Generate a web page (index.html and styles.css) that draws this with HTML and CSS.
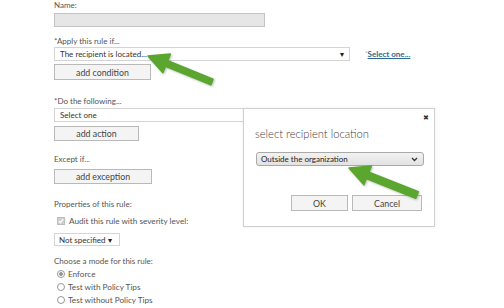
FILE: index.html
```html
<!DOCTYPE html>
<html lang="en">
<head>
  <meta charset="UTF-8">
  <title>New rule</title>
  <link rel="stylesheet" href="styles.css">
</head>
<body>
  <div class="rule-form">
    <div class="field-label">Name:</div>
    <div class="name-input"></div>

    <div class="section section-apply">
      <div class="field-label">*Apply this rule if...</div>
      <div class="select-row">
        <div class="combo combo-wide">
          <span>The recipient is located...</span>
          <span class="combo-arrow">&#9662;</span>
        </div>
        <span class="select-link"><span class="req">*</span><a href="#">Select one...</a></span>
      </div>
      <button class="win-button btn-condition">add condition</button>
    </div>

    <div class="section section-do">
      <div class="field-label">*Do the following...</div>
      <div class="combo combo-wide combo-plain">
        <span>Select one</span>
      </div>
      <button class="win-button btn-action">add action</button>
    </div>

    <div class="section section-except">
      <div class="field-label">Except if...</div>
      <button class="win-button btn-exception">add exception</button>
    </div>

    <div class="section section-props">
      <div class="field-label">Properties of this rule:</div>
      <div class="check-row">
        <svg class="checkbox" width="8" height="8" viewBox="0 0 8 8">
          <rect x="0.5" y="0.5" width="7" height="7" fill="#d0d0d0" stroke="#bdbdbd"/>
          <path d="M1.8 4.2 L3.3 5.6 L6.2 2.2" fill="none" stroke="#fff" stroke-width="1.2"/>
        </svg>
        <span>Audit this rule with severity level:</span>
      </div>
      <div class="combo combo-small">
        <span>Not specified</span>
        <span class="combo-arrow">&#9662;</span>
      </div>
    </div>

    <div class="section section-mode">
      <div class="field-label">Choose a mode for this rule:</div>
      <div class="radio-row"><span class="radio checked"></span>Enforce</div>
      <div class="radio-row"><span class="radio"></span>Test with Policy Tips</div>
      <div class="radio-row"><span class="radio"></span>Test without Policy Tips</div>
    </div>
  </div>

  <div class="dialog">
    <span class="dialog-close">&#10006;</span>
    <div class="dialog-title">select recipient location</div>
    <div class="dialog-select">
      <span>Outside the organization</span>
      <svg class="chevron" width="7" height="5" viewBox="0 0 7 5">
        <path d="M1 1 L3.5 3.5 L6 1" fill="none" stroke="#333" stroke-width="1.3"/>
      </svg>
    </div>
    <div class="dialog-buttons">
      <button class="win-button btn-ok">OK</button>
      <button class="win-button btn-cancel">Cancel</button>
    </div>
  </div>

  <svg class="arrows" width="504" height="308" viewBox="0 0 504 308">
    <polygon points="148,56 170.3,54.1 167.7,60.6 213.1,79.2 210.9,84.8 165.5,66.2 162.9,72.7" />
    <polygon points="349,168 371.3,166.1 368.9,172.1 418.3,191.7 415.7,198.3 366.3,178.6 363.9,184.7" />
  </svg>
</body>
</html>
```

FILE: styles.css
```css
body {
  margin: 0;
  padding: 0;
  background: #fff;
  font-family: 'Lato', 'Open Sans', sans-serif;
  color: #444;
  width: 504px;
  height: 308px;
  overflow: hidden;
  position: relative;
  white-space: nowrap;
}

.rule-form {
  padding-left: 54px;
  display: flex;
  flex-direction: column;
  align-items: flex-start;
}

.field-label {
  font-size: 8px;
  line-height: 11px;
  height: 11px;
  color: #555;
}

.name-input {
  margin-top: 2px;
  width: 209px;
  height: 12px;
  background: #e6e6e6;
  border: 1px solid #c4c4c4;
}

.section {
  display: flex;
  flex-direction: column;
  align-items: flex-start;
}

.section-apply { margin-top: 9px; }
.section-do { margin-top: 16px; }
.section-except { margin-top: 13px; }
.section-props { margin-top: 15px; }
.section-mode { margin-top: 10px; }

.select-row {
  display: flex;
  align-items: center;
}

.combo {
  box-sizing: border-box;
  display: flex;
  align-items: center;
  justify-content: space-between;
  height: 14px;
  padding: 0 5px 0 5px;
  border: 1px solid #d4d4d4;
  background: #fff;
  font-size: 8px;
  color: #333;
}

.combo-wide { width: 296px; }

.combo-plain { margin-top: 1px; }

.combo-arrow {
  font-size: 8px;
  color: #222;
}

.select-link {
  margin-left: 15px;
  font-size: 8px;
  color: #888;
}

.select-link .req {
  font-size: 6px;
  vertical-align: top;
}

.select-link a {
  color: #2b6a8e;
  font-weight: 700;
}

.win-button {
  box-sizing: border-box;
  height: 16px;
  padding: 0;
  background: #f4f4f4;
  border: 1px solid #b9b9b9;
  font-family: 'Lato', 'Open Sans', sans-serif;
  font-size: 8.8px;
  color: #444;
}

.btn-condition { margin-top: 3px; width: 97px; }
.btn-action { margin-top: 4px; width: 85px; height: 15px; }
.btn-exception { margin-top: 4px; width: 98px; height: 15px; }

.check-row {
  margin-top: 5px;
  display: flex;
  align-items: center;
  font-size: 8.2px;
  line-height: 12px;
  color: #555;
}

.checkbox {
  margin: 0 4px 0 3px;
}

.combo-small {
  margin-top: 6px;
  width: 66px;
  height: 13px;
  padding: 0 7px 0 4px;
}

.radio-row {
  display: flex;
  align-items: center;
  height: 13px;
  font-size: 8.2px;
  color: #555;
}

.radio-row:first-of-type { margin-top: 1px; }

.radio {
  box-sizing: border-box;
  width: 8px;
  height: 8px;
  margin: 0 3px 0 3px;
  border: 1px solid #999;
  border-radius: 50%;
  background: #fff;
}

.radio.checked {
  background: radial-gradient(circle, #9a9a9a 0 1.6px, #fff 2.2px);
}

.dialog {
  position: absolute;
  left: 243px;
  top: 108px;
  box-sizing: border-box;
  width: 192px;
  height: 119px;
  padding: 0 12px 0 11px;
  background: #fff;
  border: 1px solid #d0d0d0;
  box-shadow: 0 0 3px rgba(0, 0, 0, 0.08);
}

.dialog-close {
  position: absolute;
  right: 5px;
  top: 4px;
  font-size: 7px;
  color: #333;
}

.dialog-title {
  margin-top: 17px;
  font-size: 11.2px;
  line-height: 15px;
  color: #444;
  font-weight: 300;
}

.dialog-select {
  box-sizing: border-box;
  margin: 11px 0 0 1px;
  width: 168px;
  height: 14px;
  display: flex;
  align-items: center;
  justify-content: space-between;
  padding: 0 5px 0 4px;
  border: 1px solid #a9a9a9;
  border-radius: 3px;
  background: linear-gradient(#f2f2f2, #e2e2e2);
  font-size: 8px;
  color: #222;
}

.dialog-buttons {
  margin-top: 29px;
  display: flex;
  justify-content: flex-end;
  gap: 4px;
}

.btn-ok { width: 57px; }
.btn-cancel { width: 70px; }

.arrows {
  position: absolute;
  left: 0;
  top: 0;
  pointer-events: none;
}

.arrows polygon {
  fill: #5ba62e;
  stroke: #5ba62e;
  stroke-width: 1.5;
  stroke-linejoin: round;
  filter: drop-shadow(1px 1px 1px rgba(0, 0, 0, 0.25));
}
```
